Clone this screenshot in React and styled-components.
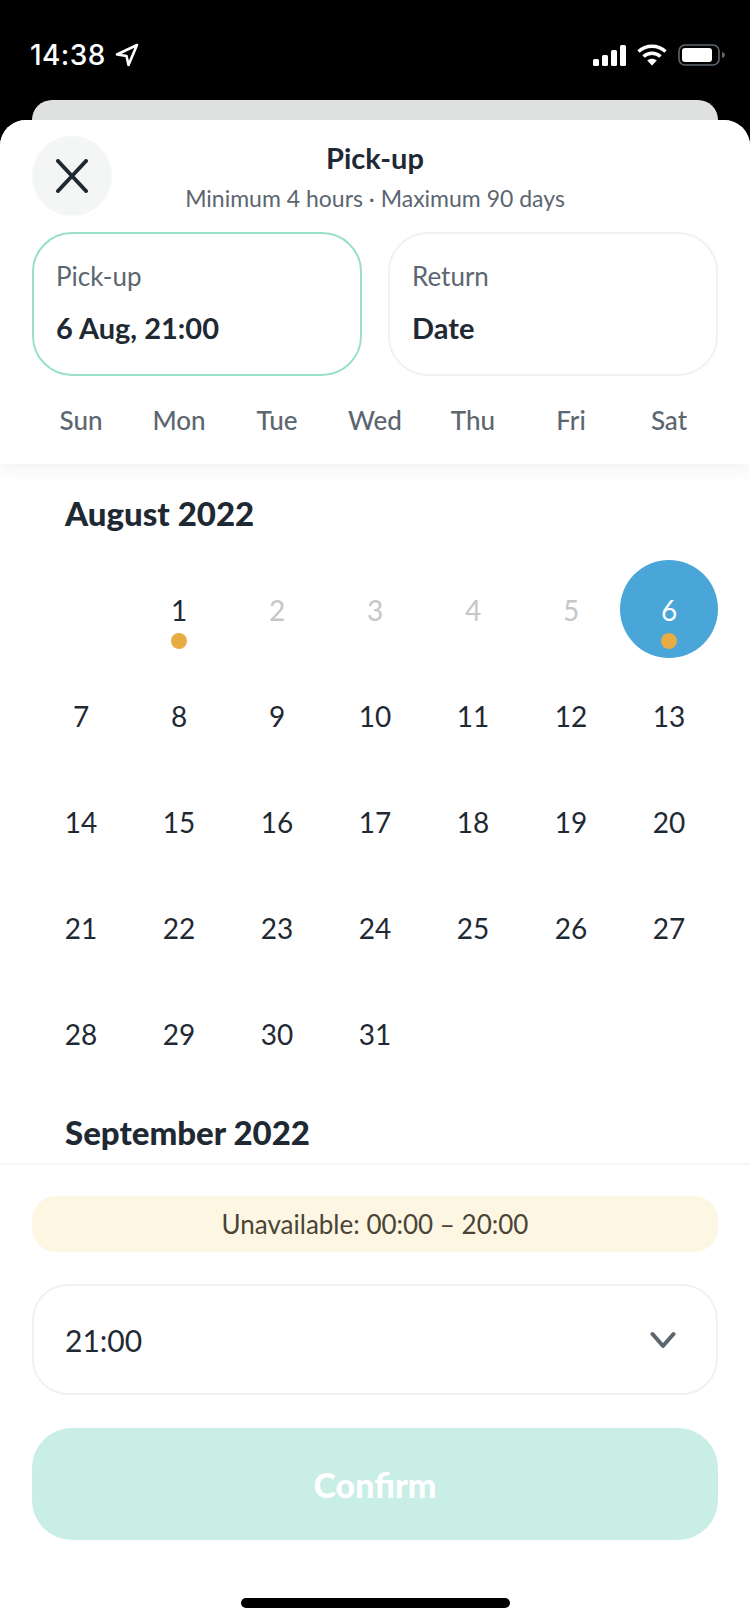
import React from 'react';
import styled, { createGlobalStyle } from 'styled-components';

const Global = createGlobalStyle`
  html, body { margin: 0; padding: 0; background: #000; }
  * { box-sizing: border-box; }
  body { font-family: "Lato", "Noto Sans", sans-serif; }
`;
const Phone = styled.div`
  width: 750px; height: 1624px; background: #000; display: flex; flex-direction: column; overflow: hidden;
`;
const StatusBar = styled.div`
  height: 100px; flex: none; display: flex; align-items: flex-start; justify-content: space-between;
  padding: 40px 25px 0 30px; color: #fff;
`;
const StatusLeft = styled.div`
  display: flex; align-items: center; gap: 9px; height: 30px;
`;
const Time = styled.span`
  font-family: "Inter", sans-serif; font-size: 28px; font-weight: 500; line-height: 30px; letter-spacing: 0.4px;
`;
const StatusRight = styled.div`
  display: flex; align-items: center; gap: 11px; height: 30px; padding-top: 0;
`;
const BackCard = styled.div`
  height: 20px; flex: none; margin: 0 32px; background: #dfe1e0; border-radius: 22px 22px 0 0;
`;
const Sheet = styled.div`
  flex: 1; min-height: 0; background: #fff; border-radius: 26px 26px 0 0; display: flex; flex-direction: column; overflow: hidden;
`;
const Header = styled.header`
  flex: none; height: 344px; background: #fff; position: relative; z-index: 1;
  box-shadow: 0 4px 16px rgba(31, 41, 51, 0.07); padding: 16px 32px 0; display: flex; flex-direction: column;
`;
const TopRow = styled.div`
  display: grid; grid-template-columns: 80px 1fr 80px; height: 80px; margin-bottom: 16px;
`;
const CloseButton = styled.button`
  width: 80px; height: 80px; border: 0; padding: 0; border-radius: 50%; background: #f4f6f5; display: flex; align-items: center; justify-content: center;
`;
const TitleBlock = styled.div`
  text-align: center; display: flex; flex-direction: column; align-items: center;
`;
const Title = styled.div`
  font-size: 29px; font-weight: 700; line-height: 36px; color: #1f2933; margin-top: 4px;
`;
const Subtitle = styled.div`
  font-size: 23px; line-height: 28px; color: #5c6670; margin-top: 8px; white-space: nowrap;
`;
const DateCards = styled.div`
  display: grid; grid-template-columns: 1fr 1fr; gap: 26px; height: 144px;
`;
const DateCard = styled.div`
  border: 2px solid ${p => (p.$active ? '#9adfc8' : '#f0f1f1')}; border-radius: 40px; padding: 20px 22px 0;
`;
const CardLabel = styled.div`
  font-size: 26px; line-height: 44px; color: #5c6670;
`;
const CardValue = styled.div`
  font-size: 29px; font-weight: 700; line-height: 44px; color: #1f2933; margin-top: 8px;
`;
const Weekdays = styled.div`
  flex: 1; display: grid; grid-template-columns: repeat(7, 98px); align-items: center; justify-items: center;
`;
const Weekday = styled.span`
  font-size: 26px; font-weight: 500; color: #5c6670;
`;
const Calendar = styled.div`
  flex: 1; min-height: 0; overflow: hidden; padding: 29px 32px 0;
`;
const MonthTitle = styled.h2`
  margin: 0; padding-left: 33px; font-size: 33px; font-weight: 900; line-height: 40px; color: #1f2933;
`;
const NextMonth = styled(MonthTitle)`
  margin-top: 30px;
`;
const DayGrid = styled.div`
  margin-top: 27px; display: grid; grid-template-columns: repeat(7, 98px); grid-auto-rows: 98px; row-gap: 8px;
`;
const Day = styled.div`
  position: relative; display: flex; align-items: center; justify-content: center; font-size: 28px; padding-top: 2px;
  color: ${p => (p.$selected ? '#fff' : p.$disabled ? '#c4c6c8' : '#1f2933')};
  background: ${p => (p.$selected ? '#4aa5d8' : 'transparent')};
  border-radius: 50%;
`;
const Dot = styled.span`
  position: absolute; left: 41px; top: 73px; width: 16px; height: 16px; border-radius: 50%; background: #e8ac42;
`;
const Footer = styled.footer`
  flex: none; height: 461px; border-top: 2px solid #f5f6f6; padding: 31px 32px 0; display: flex; flex-direction: column; background: #fff;
`;
const Banner = styled.div`
  height: 56px; flex: none; border-radius: 24px; background: #fdf6e3; color: #4a4436; font-size: 26px; display: flex; align-items: center; justify-content: center;
`;
const Select = styled.div`
  height: 111px; flex: none; margin-top: 32px; border: 2px solid #f0f1f1; border-radius: 36px; display: flex; align-items: center; justify-content: space-between;
  padding: 0 40px 0 31px; font-size: 30px; color: #1f2933;
`;
const ConfirmButton = styled.button`
  height: 112px; flex: none; margin-top: 33px; border: 0; border-radius: 40px; background: #c9eee6; color: #fff; font-family: inherit; font-size: 34px; font-weight: 900;
`;
const HomeBar = styled.div`
  width: 269px; height: 10px; flex: none; align-self: center; margin-top: 58px; background: #000; border-radius: 5px;
`;

const CloseIcon = () => (
  <svg width="34" height="34" viewBox="0 0 34 34" fill="none" stroke="#1f2933" strokeWidth="4" strokeLinecap="round">
    <path d="M3 2l28 30M31 2L3 32" />
  </svg>
);
const Chevron = () => (
  <svg width="26" height="18" viewBox="0 0 26 18" fill="none" stroke="#5c6670" strokeWidth="4" strokeLinecap="round" strokeLinejoin="round">
    <path d="M2.5 3L13 15 23.5 3" />
  </svg>
);
const LocationArrow = () => (
  <svg width="24" height="24" viewBox="0 0 24 24" fill="none" stroke="#fff" strokeWidth="2.6" strokeLinejoin="round">
    <path d="M22 2L2 11.5l9.5 1.5 2 9z" />
  </svg>
);
const Signal = () => (
  <svg width="33" height="21" viewBox="0 0 33 21" fill="#fff">
    <rect x="0" y="14" width="6" height="7" rx="1.5" />
    <rect x="9" y="10" width="6" height="11" rx="1.5" />
    <rect x="18" y="5" width="6" height="16" rx="1.5" />
    <rect x="27" y="0" width="6" height="21" rx="1.5" />
  </svg>
);
const Wifi = () => (
  <svg width="30" height="22" viewBox="0 0 30 22" fill="none" stroke="#fff" strokeWidth="3.4">
    <path d="M1.5 7.5C9 0.5 21 0.5 28.5 7.5" />
    <path d="M6.5 12.5c5-4.4 12-4.4 17 0" />
    <path d="M15 21.5l-4.8-5c2.8-2.2 6.8-2.2 9.6 0z" fill="#fff" stroke="none" />
  </svg>
);
const Battery = () => (
  <svg width="47" height="22" viewBox="0 0 47 22">
    <rect x="1" y="1" width="40" height="20" rx="6" fill="none" stroke="#5c6670" strokeWidth="1.6" />
    <rect x="4" y="4" width="30" height="14" rx="3" fill="#fff" />
    <path d="M44 8c2 .5 3 2 3 3s-1 2.500-3 3z" fill="#5c6670" />
  </svg>
);

const WEEKDAYS = ['Sun', 'Mon', 'Tue', 'Wed', 'Thu', 'Fri', 'Sat'];
const augustDays = [null, ...Array.from({ length: 31 }, (_, i) => i + 1)];

export default function App() {
  return (
    <Phone>
      <Global />
      <StatusBar>
        <StatusLeft>
          <Time>14:38</Time>
          <LocationArrow />
        </StatusLeft>
        <StatusRight>
          <Signal />
          <Wifi />
          <Battery />
        </StatusRight>
      </StatusBar>
      <BackCard />
      <Sheet>
        <Header>
          <TopRow>
            <CloseButton aria-label="Close"><CloseIcon /></CloseButton>
            <TitleBlock>
              <Title>Pick-up</Title>
              <Subtitle>Minimum 4 hours · Maximum 90 days</Subtitle>
            </TitleBlock>
          </TopRow>
          <DateCards>
            <DateCard $active>
              <CardLabel>Pick-up</CardLabel>
              <CardValue>6 Aug, 21:00</CardValue>
            </DateCard>
            <DateCard>
              <CardLabel>Return</CardLabel>
              <CardValue>Date</CardValue>
            </DateCard>
          </DateCards>
          <Weekdays>
            {WEEKDAYS.map(d => <Weekday key={d}>{d}</Weekday>)}
          </Weekdays>
        </Header>
        <Calendar>
          <MonthTitle>August 2022</MonthTitle>
          <DayGrid>
            {augustDays.map((d, i) => (
              <Day key={i} $disabled={d >= 2 && d <= 5} $selected={d === 6}>
                {d}
                {(d === 1 || d === 6) && <Dot />}
              </Day>
            ))}
          </DayGrid>
          <NextMonth>September 2022</NextMonth>
        </Calendar>
        <Footer>
          <Banner>Unavailable: 00:00 – 20:00</Banner>
          <Select>
            <span>21:00</span>
            <Chevron />
          </Select>
          <ConfirmButton>Confirm</ConfirmButton>
          <HomeBar />
        </Footer>
      </Sheet>
    </Phone>
  );
}
